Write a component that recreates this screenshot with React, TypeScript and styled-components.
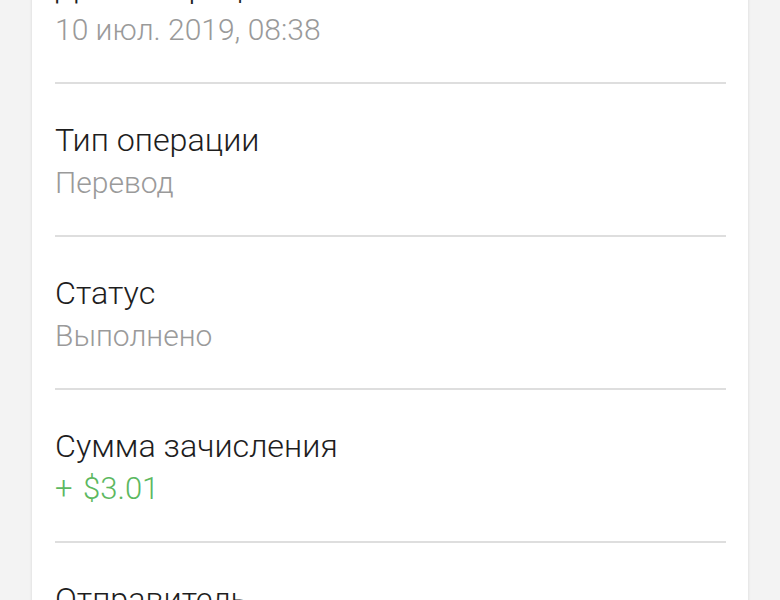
import styled, { createGlobalStyle } from 'styled-components'

const GlobalStyle = createGlobalStyle`
  html, body {
    margin: 0;
    padding: 0;
    background: #f3f3f3;
    font-family: Roboto, 'Noto Sans', sans-serif;
    overflow: hidden;
  }
`

const Screen = styled.div`
  height: 600px;
  overflow: hidden;
  padding: 0 32px;
`

const Card = styled.div`
  margin-top: -69px;
  background: #fff;
  box-shadow: 0 0 3px rgba(0, 0, 0, 0.12);
  padding: 0 22px 0 23px;
`

const Row = styled.div`
  display: flex;
  flex-direction: column;
  gap: 5px;
  padding: 36px 0 34px;
  border-bottom: 2px solid #dedede;
`

const Label = styled.div`
  font-size: 32.25px;
  font-weight: 300;
  line-height: 40px;
  color: #1e1e1e;
`

const Value = styled.div<{ $tone?: 'green' }>`
  font-size: ${(p) => (p.$tone === 'green' ? '31px' : '30px')};
  font-weight: 300;
  line-height: 36px;
  color: ${(p) => (p.$tone === 'green' ? '#5cb860' : '#9a9a9a')};
`

const Sign = styled.span`
  margin-right: 3px;
`

const rows: { label: string; value: string; sign?: string; tone?: 'green' }[] = [
  { label: 'Дата операции', value: '10 июл. 2019, 08:38' },
  { label: 'Тип операции', value: 'Перевод' },
  { label: 'Статус', value: 'Выполнено' },
  { label: 'Сумма зачисления', sign: '+', value: '$3.01', tone: 'green' },
  { label: 'Отправитель', value: '' },
]

export default function App() {
  return (
    <Screen>
      <GlobalStyle />
      <Card>
        {rows.map((r) => (
          <Row key={r.label}>
            <Label>{r.label}</Label>
            <Value $tone={r.tone}>
              {r.sign && <Sign>{r.sign} </Sign>}
              {r.value || '\u00a0'}
            </Value>
          </Row>
        ))}
      </Card>
    </Screen>
  )
}
